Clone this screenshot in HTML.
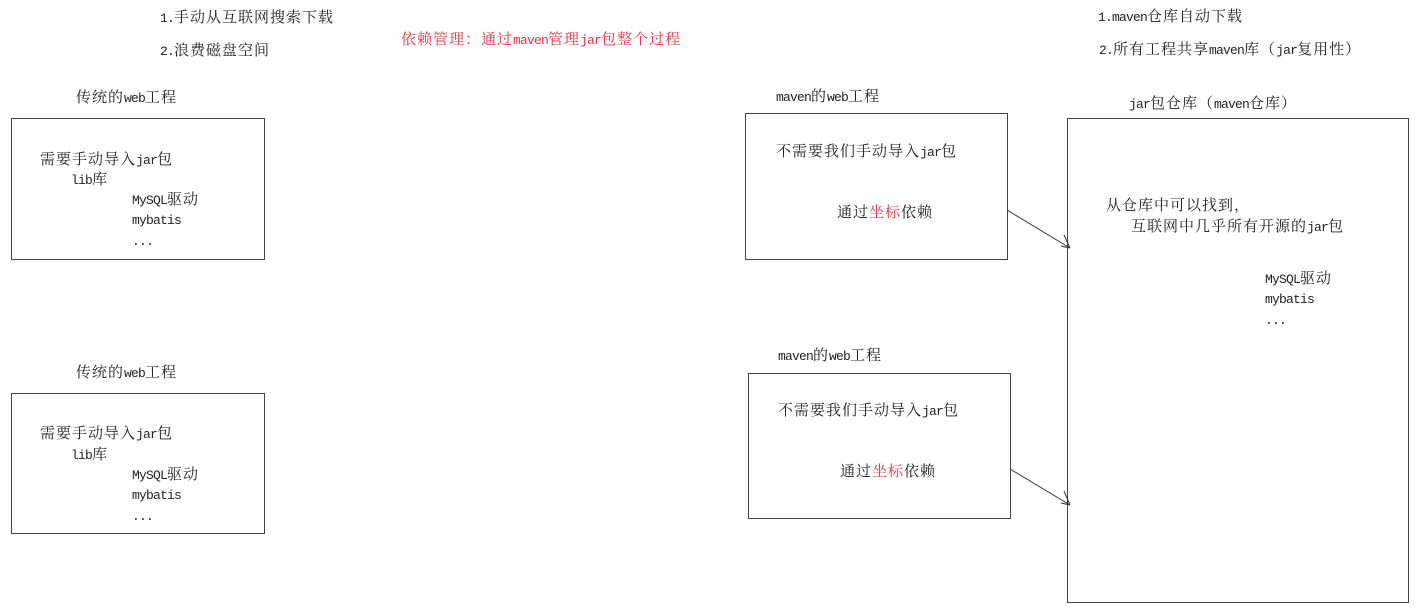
<!DOCTYPE html>
<html><head><meta charset="utf-8"><style>
body{margin:0;width:1424px;height:610px;background:#fff;position:relative;overflow:hidden;font-family:"Liberation Mono","Noto Serif CJK SC",serif;font-size:15px;letter-spacing:1px;color:#222}
.t{position:absolute;white-space:nowrap;line-height:18px}
i{font-style:normal;font-size:13px;letter-spacing:-0.8px;font-family:"Liberation Mono",monospace}
.b{position:absolute;border:1px solid #444;box-sizing:border-box}
.r{color:#ee3344}
</style></head><body>
<div class="t" style="left:160px;top:10px"><i>1.</i>手动从互联网搜索下载</div>
<div class="t" style="left:160px;top:43px"><i>2.</i>浪费磁盘空间</div>
<div class="t r" style="left:401px;top:32px">依赖管理：通过<i>maven</i>管理<i>jar</i>包整个过程</div>
<div class="t" style="left:1098px;top:9px"><i>1.maven</i>仓库自动下载</div>
<div class="t" style="left:1099px;top:42px"><i>2.</i>所有工程共享<i>maven</i>库（<i>jar</i>复用性）</div>

<div class="t" style="left:76px;top:90px">传统的<i>web</i>工程</div>
<div class="b" style="left:11px;top:118px;width:254px;height:142px"></div>
<div class="t" style="left:40px;top:152px">需要手动导入<i>jar</i>包</div>
<div class="t" style="left:71px;top:172px"><i>lib</i>库</div>
<div class="t" style="left:132px;top:192px"><i>MySQL</i>驱动</div>
<div class="t" style="left:132px;top:212px"><i>mybatis</i></div>
<div class="t" style="left:132px;top:233px"><i>...</i></div>

<div class="t" style="left:76px;top:365px">传统的<i>web</i>工程</div>
<div class="b" style="left:11px;top:393px;width:254px;height:141px"></div>
<div class="t" style="left:40px;top:426px">需要手动导入<i>jar</i>包</div>
<div class="t" style="left:71px;top:447px"><i>lib</i>库</div>
<div class="t" style="left:132px;top:467px"><i>MySQL</i>驱动</div>
<div class="t" style="left:132px;top:487px"><i>mybatis</i></div>
<div class="t" style="left:132px;top:508px"><i>...</i></div>

<div class="t" style="left:776px;top:89px"><i>maven</i>的<i>web</i>工程</div>
<div class="b" style="left:745px;top:113px;width:263px;height:147px"></div>
<div class="t" style="left:776px;top:144px">不需要我们手动导入<i>jar</i>包</div>
<div class="t" style="left:837px;top:205px">通过<span class="r">坐标</span>依赖</div>

<div class="t" style="left:778px;top:348px"><i>maven</i>的<i>web</i>工程</div>
<div class="b" style="left:748px;top:373px;width:263px;height:146px"></div>
<div class="t" style="left:778px;top:403px">不需要我们手动导入<i>jar</i>包</div>
<div class="t" style="left:840px;top:464px">通过<span class="r">坐标</span>依赖</div>

<div class="t" style="left:1129px;top:96px"><i>jar</i>包仓库（<i>maven</i>仓库）</div>
<div class="b" style="left:1067px;top:118px;width:342px;height:485px"></div>
<div class="t" style="left:1106px;top:198px">从仓库中可以找到，</div>
<div class="t" style="left:1131px;top:219px">互联网中几乎所有开源的<i>jar</i>包</div>
<div class="t" style="left:1265px;top:271px"><i>MySQL</i>驱动</div>
<div class="t" style="left:1265px;top:291px"><i>mybatis</i></div>
<div class="t" style="left:1265px;top:312px"><i>...</i></div>

<svg style="position:absolute;left:0;top:0" width="1424" height="610">
<g stroke="#333" stroke-width="1" fill="none">
<path d="M1007 210 L1070 248 M1070 248 L1064 235 M1070 248 L1061 246"/>
<path d="M1010 469 L1070 505 M1070 505 L1064 491 M1070 505 L1061 503"/>
</g></svg>
</body></html>
